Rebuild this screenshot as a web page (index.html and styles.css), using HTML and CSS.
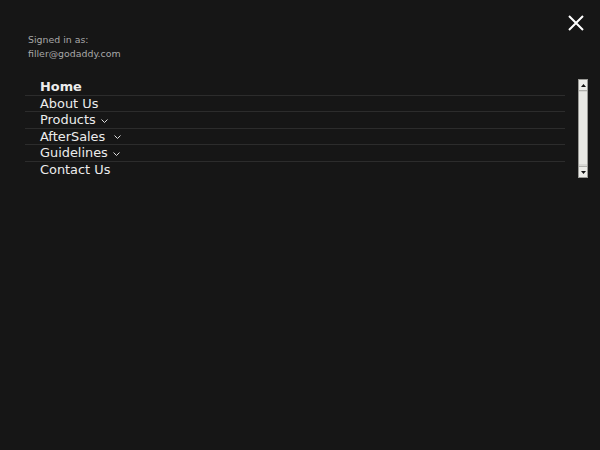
FILE: index.html
```html
<!DOCTYPE html>
<html lang="en">
<head>
    <meta charset="UTF-8">
    <meta name="viewport" content="width=device-width, initial-scale=1.0">
    <title>Menu</title>
    <link rel="stylesheet" href="styles.css">
</head>
<body>
    <div class="drawer">
        <button class="close" aria-label="Close">
            <svg width="16" height="16" viewBox="0 0 16 16"><path d="M1 1L15 15M15 1L1 15" stroke="#fff" stroke-width="2"/></svg>
        </button>
        <div class="account">
            <div>Signed in as:</div>
            <div>filler@godaddy.com</div>
        </div>
        <div class="nav-wrap">
            <ul class="nav">
                <li class="active">Home</li>
                <li>About Us</li>
                <li>Products <span class="caret"><svg width="7" height="4" viewBox="0 0 7 4"><path d="M0.5 0.5L3.5 3.5L6.5 0.5" stroke="#ddd" fill="none"/></svg></span></li>
                <li>AfterSales &nbsp;<span class="caret"><svg width="7" height="4" viewBox="0 0 7 4"><path d="M0.5 0.5L3.5 3.5L6.5 0.5" stroke="#ddd" fill="none"/></svg></span></li>
                <li>Guidelines <span class="caret"><svg width="7" height="4" viewBox="0 0 7 4"><path d="M0.5 0.5L3.5 3.5L6.5 0.5" stroke="#ddd" fill="none"/></svg></span></li>
                <li class="last">Contact Us</li>
            </ul>
            <!-- drawn scrollbar, the headless browser hides real ones -->
            <div class="scrollbar" aria-hidden="true">
                <div class="sb-btn"><svg width="5" height="3" viewBox="0 0 5 3"><path d="M2.5 0L5 3H0z" fill="#111"/></svg></div>
                <div class="sb-track"><div class="sb-thumb"></div></div>
                <div class="sb-btn"><svg width="5" height="3" viewBox="0 0 5 3"><path d="M0 0H5L2.5 3z" fill="#111"/></svg></div>
            </div>
        </div>
    </div>
</body>
</html>
```

FILE: styles.css
```css
html, body { margin: 0; height: 100%; background: #161616; }
body { font-family: "DejaVu Sans", sans-serif; color: #ececec; }
.drawer { position: relative; padding: 33px 12px 0 25px; }
.close { position: absolute; top: 15px; right: 16px; background: none; border: 0; padding: 0; cursor: pointer; }
.close svg { display: block; }
.account { padding-left: 3px; font-size: 9.4px; line-height: 14px; color: #a8a8a8; }
.nav-wrap { display: flex; gap: 13px; margin-top: 18px; height: 99px; }
.nav { flex: 1; list-style: none; margin: 0; padding: 0; }
.nav li { padding-left: 15px; font-size: 12.9px; line-height: 15.5px; border-bottom: 1px solid #2c2c2c; }
.nav li.last { border-bottom: 0; }
.nav li.active { font-weight: bold; }
.caret { display: inline-block; vertical-align: middle; margin-left: 1px; }
.caret svg { display: block; }

.scrollbar { width: 10px; display: flex; flex-direction: column; background: #d8d8d4; border: 1px solid #9a9a96; box-sizing: border-box; }
.sb-btn { height: 10px; display: flex; align-items: center; justify-content: center; background: #ececE8; border-bottom: 1px solid #b0b0ac; }
.sb-btn:last-child { border-bottom: 0; border-top: 1px solid #b0b0ac; }
.sb-btn svg { display: block; }
.sb-track { flex: 1; padding: 1px 0 2px; display: flex; }
.sb-thumb { flex: 1; background: #e9e9e5; }
```
